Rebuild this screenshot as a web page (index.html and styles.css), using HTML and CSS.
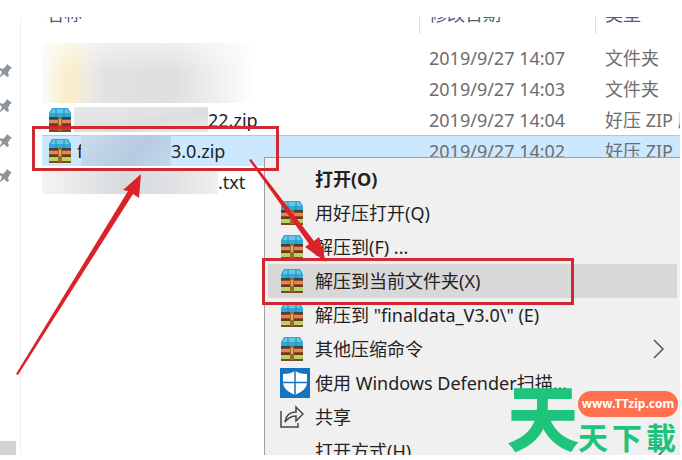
FILE: index.html
```
<!DOCTYPE html>
<html lang="zh-CN">
<head>
    <meta charset="UTF-8">
    <meta name="viewport" content="width=device-width, initial-scale=1.0">
    <title>解压到当前文件夹</title>
    <link rel="stylesheet" href="styles.css">
</head>
<body>
    <!-- shared icons -->
    <svg class="defs" width="0" height="0">
        <symbol id="zip" viewBox="0 0 24 24">
            <path d="M4 0h16l3 5v5H1V5z" fill="#33a8d4"/>
            <path d="M5 1h14l2 4H3z" fill="#62c8ea"/>
            <path d="M8 1v8M16 1v8" stroke="#2a86ab" fill="none"/>
            <rect x="1" y="9" width="22" height="2" fill="#2c4a50"/>
            <rect x="1" y="11" width="22" height="5" fill="#9c4a22"/>
            <rect x="1" y="12" width="22" height="3" fill="#dd8560"/>
            <rect x="1" y="16" width="22" height="2" fill="#6b3a1a"/>
            <rect class="zip-base" x="1" y="18" width="22" height="4"/>
            <rect x="1" y="22" width="22" height="2" fill="#7c4a20"/>
            <rect x="10" y="9" width="4" height="14" fill="#9a6a28"/>
            <rect x="11" y="11" width="2" height="6" fill="#d9b25a"/>
        </symbol>
        <symbol id="pin" viewBox="0 0 14 14">
            <path d="M9 0l5 4-2 1-2 4 1 3-2 1-3-3-5 4 3-6-3-3 1-1 3 1 3-3z" fill="#8d959c"/>
        </symbol>
        <symbol id="arrow-right" viewBox="0 0 12 20">
            <path d="M1 1l9 9-9 9" fill="none" stroke="#555" stroke-width="1.5"/>
        </symbol>
    </svg>

    <main class="explorer">
        <aside class="sidebar">
            <svg class="pin"><use href="#pin"/></svg>
            <svg class="pin"><use href="#pin"/></svg>
            <svg class="pin"><use href="#pin"/></svg>
            <svg class="pin"><use href="#pin"/></svg>
            <div class="sidebar-end"></div>
        </aside>

        <div class="list">
            <table class="files">
                <thead>
                    <tr>
                        <th class="col-name"><span>名称</span></th>
                        <th class="col-date"><span>修改日期</span></th>
                        <th><span>类型</span></th>
                    </tr>
                </thead>
                <tbody>
                    <tr>
                        <td rowspan="2"><div class="blur blur-folders"></div></td>
                        <td class="meta">2019/9/27 14:07</td>
                        <td class="meta">文件夹</td>
                    </tr>
                    <tr>
                        <td class="meta">2019/9/27 14:03</td>
                        <td class="meta">文件夹</td>
                    </tr>
                    <tr>
                        <td><div class="name"><svg class="icon red"><use href="#zip"/></svg><span class="blur blur-zip"></span>22.zip</div></td>
                        <td class="meta">2019/9/27 14:04</td>
                        <td class="meta">好压 ZIP 压缩文件</td>
                    </tr>
                    <tr class="selected">
                        <td><div class="name"><svg class="icon"><use href="#zip"/></svg><span class="first">f</span><span class="blur blur-selected"></span>3.0.zip</div></td>
                        <td class="meta">2019/9/27 14:02</td>
                        <td class="meta">好压 ZIP</td>
                    </tr>
                    <tr>
                        <td><div class="name txt"><span class="blur blur-txt"></span>.txt</div></td>
                        <td></td>
                        <td></td>
                    </tr>
                </tbody>
            </table>
        </div>

        <div class="menu">
            <button class="item default"><span class="slot"></span>打开(O)</button>
            <button class="item"><span class="slot"><svg class="icon"><use href="#zip"/></svg></span>用好压打开(Q)</button>
            <button class="item"><span class="slot"><svg class="icon"><use href="#zip"/></svg></span>解压到(F) ...</button>
            <button class="item active"><span class="slot"><svg class="icon"><use href="#zip"/></svg></span>解压到当前文件夹(X)</button>
            <button class="item"><span class="slot"><svg class="icon"><use href="#zip"/></svg></span>解压到 "finaldata_V3.0\" (E)</button>
            <button class="item"><span class="slot"><svg class="icon"><use href="#zip"/></svg></span>其他压缩命令<svg class="more"><use href="#arrow-right"/></svg></button>
            <button class="item"><span class="slot">
                <svg class="shield" viewBox="0 0 30 30">
                    <rect width="30" height="30" fill="#1673bd"/>
                    <path d="M15 3c3 2 7 3 12 3v8c0 6-5 10-12 13C8 24 3 20 3 14V6c5 0 9-1 12-3z" fill="#fff"/>
                    <path d="M15 3v24M3 14.500h24" stroke="#1673bd" stroke-width="1.500"/>
                </svg></span>使用 Windows Defender扫描...</button>
            <button class="item"><span class="slot">
                <svg class="share" viewBox="0 0 24 24">
                    <path d="M1 6v16h17v-4"/>
                    <path d="M5 17c1-7 5-10 11-10V2l7 7-7 7v-5c-5 0-8 2-11 6z"/>
                </svg></span>共享</button>
            <button class="item"><span class="slot"></span>打开方式(H)<svg class="more"><use href="#arrow-right"/></svg></button>
        </div>

        <!-- red boxes and arrows -->
        <svg class="marks" width="682" height="438" viewBox="0 17 682 438">
            <g fill="none" stroke="#cf2a33" stroke-width="3">
                <rect x="33.500" y="127.500" width="244" height="42"/>
                <rect x="263.500" y="259.500" width="309" height="44"/>
            </g>
            <g fill="#dc2229">
                <path d="M16 374l112-183-5-1 18-16-2 24-6-4L18 375z"/>
                <path d="M249 160l2-1 63 82 5-4 7 25-21-15 4-3z"/>
            </g>
        </svg>

        <div class="logo">
            <span class="logo-big">天</span>
            <div class="logo-side">
                <span class="logo-url">www.TTzip.com</span>
                <div class="logo-small"><span>天</span><span>下</span><span>載</span></div>
            </div>
        </div>
    </main>
</body>
</html>
```
FILE: styles.css
```
* {
    box-sizing: border-box;
}
body {
    margin: 0;
    padding: 17px 2px 5px 0;
    height: 100vh;
    background-color: #fff;
    font-family: "Noto Sans", "Noto Sans CJK SC", sans-serif;
    font-size: 18px;
    line-height: 24px;
    color: #222;
}
.defs {
    position: absolute;
}
.explorer {
    position: relative;
    display: flex;
    height: 100%;
    overflow: hidden;
}

/* left pane */
.sidebar {
    flex: 0 0 21px;
    display: flex;
    flex-direction: column;
    gap: 21px;
    padding-top: 47px;
    border-right: 1px solid #f0f0f0;
}
.pin {
    flex: none;
    width: 14px;
    height: 14px;
    margin-left: -2px;
}
.sidebar-end {
    width: 16px;
    height: 14px;
    margin-top: auto;
    background-color: #d2d2d2;
}

/* file list */
.list {
    flex: 1;
    min-width: 0;
    padding-left: 21px;
    overflow: hidden;
}
.files {
    width: 100%;
    margin-top: -15px;
    table-layout: fixed;
    border-collapse: collapse;
}
.files th {
    height: 40px;
    padding: 0;
    vertical-align: top;
    text-align: left;
    font-weight: normal;
    color: #4c607a;
}
.files th span {
    display: block;
    height: 32px;
    padding-left: 9px;
    border-right: 1px solid #dcdcdc;
}
.files th:first-child span {
    padding-left: 4px;
}
.files th:last-child span {
    border-right: none;
}
.col-name {
    width: 378px;
}
.col-date {
    width: 176px;
}
.files td {
    height: 31px;
    padding: 0;
    white-space: nowrap;
    overflow: hidden;
}
.files .meta {
    padding-left: 9px;
    color: #6d6d6d;
}
.files .selected td {
    background-color: #cce8ff;
    box-shadow: inset 0 1px #a5cbe8;
}
.name {
    display: flex;
    align-items: center;
    height: 31px;
    padding-left: 6px;
}
.name.txt {
    padding-left: 0;
}
.icon {
    flex: none;
    width: 24px;
    height: 24px;
    fill: #b4d46a;
}
.icon.red {
    fill: #b5401e;
}
.first {
    width: 4px;
    margin-left: 5px;
    overflow: hidden;
}
.blur {
    flex: none;
    display: block;
}
.blur-folders {
    width: 214px;
    height: 60px;
    background:
        linear-gradient(rgba(255, 255, 255, 0.5), rgba(255, 255, 255, 0) 50%),
        linear-gradient(90deg, #fafafa, #faf0d0 10%, #f8eecb 14%, #eceae2 22%, #e2e2e2 30%, #dedede 60%, #eeeeee 80%, #fff);
}
.blur-zip {
    width: 134px;
    height: 25px;
    margin-left: 2px;
    background: linear-gradient(170deg, #e8e8e8, #dcdfe1 60%, #e8e8e8);
}
.blur-selected {
    width: 90px;
    height: 31px;
    background: linear-gradient(130deg, #c8dcec, #b6cbdf 60%, #c2d8eb);
}
.blur-txt {
    width: 176px;
    height: 25px;
    background: linear-gradient(90deg, #f4f4f4, #d8dbde 45%, #dfe1e3 75%, #f0f0f0);
}

/* context menu */
.menu {
    position: absolute;
    top: 140px;
    left: 264px;
    right: 0;
    padding: 4px 3px;
    background-color: #f0f0f0;
    border: 1px solid #a0a0a0;
    border-right: none;
}
.item {
    display: flex;
    align-items: center;
    width: 100%;
    height: 34px;
    padding: 0 12px;
    border: none;
    background: none;
    font: inherit;
    color: inherit;
    text-align: left;
    white-space: nowrap;
}
.item.default {
    font-weight: bold;
}
.item.active {
    background-color: #d8d8d8;
}
.slot {
    flex: 0 0 35px;
    display: flex;
}
.shield {
    width: 30px;
    height: 30px;
}
.share {
    width: 24px;
    height: 24px;
    fill: none;
    stroke: #444;
    stroke-width: 1.5;
}
.more {
    width: 12px;
    height: 20px;
    margin-left: auto;
}

/* annotations over the window */
.marks {
    position: absolute;
    top: 0;
    left: 0;
}

/* site logo */
.logo {
    position: absolute;
    right: 2px;
    bottom: 0;
    display: flex;
    align-items: flex-end;
    font-family: "Noto Sans CJK TC", sans-serif;
    font-weight: bold;
    color: #1fc47c;
}
.logo-big {
    font-size: 70px;
    line-height: 80px;
    -webkit-text-stroke: 2px #1fc47c;
}
.logo-side {
    width: 100px;
}
.logo-url {
    display: block;
    height: 26px;
    border-radius: 13px;
    background-color: #ff704e;
    color: #fff;
    font: bold 12px/26px "Noto Sans", sans-serif;
    text-align: center;
}
.logo-small {
    display: flex;
    gap: 4px;
    font-size: 30px;
    line-height: 38px;
}
```
